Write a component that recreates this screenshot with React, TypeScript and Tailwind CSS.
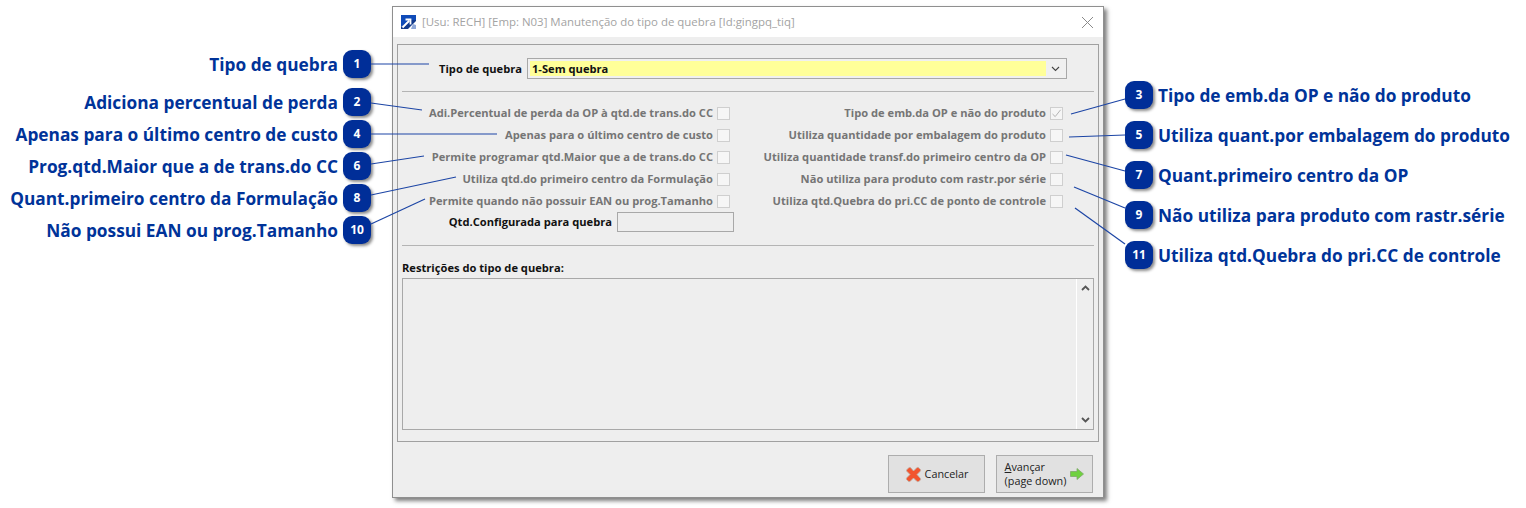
const LEFT_CALLOUTS = [
  { n: 1, label: "Tipo de quebra" },
  { n: 2, label: "Adiciona percentual de perda" },
  { n: 4, label: "Apenas para o último centro de custo" },
  { n: 6, label: "Prog.qtd.Maior que a de trans.do CC" },
  { n: 8, label: "Quant.primeiro centro da Formulação" },
  { n: 10, label: "Não possui EAN ou prog.Tamanho" },
];

const RIGHT_CALLOUTS = [
  { n: 3, label: "Tipo de emb.da OP e não do produto" },
  { n: 5, label: "Utiliza quant.por embalagem do produto" },
  { n: 7, label: "Quant.primeiro centro da OP" },
  { n: 9, label: "Não utiliza para produto com rastr.série" },
  { n: 11, label: "Utiliza qtd.Quebra do pri.CC de controle" },
];

const LEFT_CHECKS = [
  "Adi.Percentual de perda da OP à qtd.de trans.do CC",
  "Apenas para o último centro de custo",
  "Permite programar qtd.Maior que a de trans.do CC",
  "Utiliza qtd.do primeiro centro da Formulação",
  "Permite quando não possuir EAN ou prog.Tamanho",
];

const RIGHT_CHECKS = [
  { label: "Tipo de emb.da OP e não do produto", checked: true },
  { label: "Utiliza quantidade por embalagem do produto", checked: false },
  { label: "Utiliza quantidade transf.do primeiro centro da OP", checked: false },
  { label: "Não utiliza para produto com rastr.por série", checked: false },
  { label: "Utiliza qtd.Quebra do pri.CC de ponto de controle", checked: false },
];

const LEADERS = [
  [371, 64, 429, 64],
  [371, 103, 422, 110],
  [371, 134, 497, 134],
  [371, 164, 424, 156],
  [371, 195, 456, 177],
  [371, 224, 425, 199],
  [1125, 99, 1071, 114],
  [1125, 135, 1069, 137],
  [1125, 171, 1066, 155],
  [1125, 208, 1074, 187],
  [1125, 244, 1075, 208],
];

function Badge({ n }: { n: number }) {
  return (
    <div className="flex h-[28px] w-[28px] shrink-0 items-center justify-center rounded-[9px] bg-[#002e98] text-[12px] font-bold text-white shadow-[2px_2px_3px_rgba(0,0,0,0.45)]">
      {n}
    </div>
  );
}

function Check({ checked }: { checked?: boolean }) {
  return (
    <div className="flex h-[13px] w-[13px] shrink-0 items-center justify-center border border-[#cfcfcf] bg-[#f6f6f6]">
      {checked && (
        <svg width="11" height="11" viewBox="0 0 11 11" fill="none">
          <path d="M1.5 6 L4.2 8.6 L9.6 1.8" stroke="#b4b4b4" strokeWidth="1" />
        </svg>
      )}
    </div>
  );
}

function CheckRow({ label, checked }: { label: string; checked?: boolean }) {
  return (
    <div className="flex h-[22px] items-center justify-end gap-[4px] whitespace-nowrap text-[#757575]">
      <span>{label}</span>
      <Check checked={checked} />
    </div>
  );
}

function AppIcon() {
  return (
    <svg width="15" height="14" viewBox="0 0 15 14" className="shrink-0">
      <rect width="15" height="14" fill="#ffffff" />
      <path d="M0 0 H15 V5 L9 5 L0 12 Z" fill="#0f4bb8" />
      <path d="M0 12 L9 5 H15 V6 L7 14 H0 Z" fill="#123a8c" />
      <path d="M1.5 12.5 L8 6 M4.5 4.5 H9.5 V9.5" stroke="#ffffff" strokeWidth="1.8" fill="none" />
      <path d="M10 14 L12 9 L15 10 V14 Z" fill="#8fa8d8" />
    </svg>
  );
}

function CancelIcon() {
  return (
    <svg width="17" height="17" viewBox="0 0 17 17" className="shrink-0">
      <path
        d="M1.5 4 L4 1.5 Q5 1 6 2 L8.5 5 L12 1.5 Q13 1 14 2 L15.5 3.5 Q16 4.5 15 5.5 L12 8.5 L15.5 12.5 Q16 13.5 15 14.5 L13.5 15.5 Q12.5 16 11.5 15 L8.5 12 L5 15.5 Q4 16 3 15 L1.5 13.5 Q1 12.5 2 11.5 L5 8.5 L1.5 5 Z"
        fill="#f2552f"
        stroke="#bdb3aa"
        strokeWidth="0.8"
      />
    </svg>
  );
}

function NextIcon() {
  return (
    <svg width="14" height="12" viewBox="0 0 14 12" className="shrink-0">
      <path d="M0.5 3.5 H7 V0.5 L13.5 6 L7 11.5 V8.5 H0.5 Z" fill="#6fd13f" stroke="#7fa86a" strokeWidth="0.8" />
    </svg>
  );
}

function Dialog() {
  return (
    <div className="flex h-[492px] w-[712px] shrink-0 flex-col border border-[#8f8f8f] bg-[#eeeeee] text-[11.15px] font-normal shadow-[3px_3px_4px_rgba(0,0,0,0.5)]">
      <div className="flex h-[30px] shrink-0 items-center bg-white pl-[8px] pr-[9px]">
        <AppIcon />
        <span className="ml-[6px] text-[11.45px] text-[#a3a3a3]">
          [Usu: RECH] [Emp: N03] Manutenção do tipo de quebra [Id:gingpq_tiq]
        </span>
        <svg width="13" height="13" viewBox="0 0 13 13" className="ml-auto" fill="none">
          <path d="M1 1 L12 12 M12 1 L1 12" stroke="#8a8a8a" />
        </svg>
      </div>

      <div className="mx-[4px] mt-[7px] flex h-[398px] flex-col border border-[#a0a0a0] px-[4px] font-bold">
        <div className="mt-[13px] flex h-[21px] items-center justify-end pr-[27px]">
          <span className="pt-[1px] text-[#111]">Tipo de quebra</span>
          <div className="ml-[5px] flex h-[21px] w-[540px] items-center border border-[#a8a8a8] bg-[#f0f0f0] p-[2px]">
            <div className="flex h-[15px] flex-1 items-center bg-[#ffff99] px-[2px] pt-[1px] text-[#111]">1-Sem quebra</div>
            <div className="flex w-[18px] items-center justify-center">
              <svg width="9" height="6" viewBox="0 0 9 6" fill="none">
                <path d="M1 1 L4.5 4.5 L8 1" stroke="#444" strokeWidth="1.1" />
              </svg>
            </div>
          </div>
        </div>

        <div className="mt-[12px] h-px bg-[#b4b4b4]" />

        <div className="mt-[10px] grid grid-cols-[328px_333px]">
          <div>
            {LEFT_CHECKS.map((label) => (
              <CheckRow key={label} label={label} />
            ))}
          </div>
          <div>
            {RIGHT_CHECKS.map((c) => (
              <CheckRow key={c.label} label={c.label} checked={c.checked} />
            ))}
          </div>
        </div>

        <div className="flex w-[332px] items-center justify-end gap-[5px]">
          <span className="text-[#111]">Qtd.Configurada para quebra</span>
          <div className="h-[20px] w-[117px] border border-[#a8a8a8]" />
        </div>

        <div className="mt-[13px] h-px bg-[#b4b4b4]" />

        <div className="mt-[15px] h-[14px] leading-[14px] text-[#111]">Restrições do tipo de quebra:</div>

        <div className="mt-[3px] flex h-[152px] justify-end border border-[#a8a8a8]">
          <div className="flex w-[17px] flex-col items-center justify-between border-l border-white py-[6px]">
            <svg width="9" height="6" viewBox="0 0 9 6" fill="none">
              <path d="M1 5 L4.5 1.5 L8 5" stroke="#555" strokeWidth="1.8" />
            </svg>
            <svg width="9" height="6" viewBox="0 0 9 6" fill="none">
              <path d="M1 1 L4.5 4.5 L8 1" stroke="#555" strokeWidth="1.8" />
            </svg>
          </div>
        </div>
      </div>

      <div className="mt-[13px] flex justify-end gap-[11px] pr-[10px] text-[10.8px] text-[#222]">
        <div className="flex h-[38px] w-[97px] items-center justify-center gap-[3px] border border-[#adadad] bg-[#e1e1e1]">
          <CancelIcon />
          <span>Cancelar</span>
        </div>
        <div className="flex h-[38px] w-[97px] items-center justify-center gap-[4px] border border-[#adadad] bg-[#e1e1e1]">
          <span className="leading-[14px]">
            <span className="underline">A</span>vançar
            <br />
            (page down)
          </span>
          <NextIcon />
        </div>
      </div>
    </div>
  );
}

export default function App() {
  return (
    <div className="relative flex h-[508px] w-[1526px] overflow-hidden bg-white font-['Open_Sans'] text-[17.3px] font-bold text-[#003399]">
      <div className="flex w-[371px] shrink-0 flex-col items-end gap-[4px] pt-[50px]">
        {LEFT_CALLOUTS.map((c, i) => (
          <div key={c.n} className={`flex h-[28px] items-center gap-[5px] whitespace-nowrap ${i === 1 ? "mt-[6px]" : ""}`}>
            <span className="pt-[2px]">{c.label}</span>
            <Badge n={c.n} />
          </div>
        ))}
      </div>

      <div className="ml-[21px] mt-[6px]">
        <Dialog />
      </div>

      <div className="ml-[21px] flex flex-col gap-[12px] pt-[81px]">
        {RIGHT_CALLOUTS.map((c) => (
          <div key={c.n} className="flex h-[28px] items-center gap-[5px] whitespace-nowrap">
            <Badge n={c.n} />
            <span className="pt-[1px]">{c.label}</span>
          </div>
        ))}
      </div>

      <svg width="1526" height="508" className="pointer-events-none absolute left-0 top-0">
        {LEADERS.map(([x1, y1, x2, y2]) => (
          <line key={`${x1}-${y1}`} x1={x1} y1={y1} x2={x2} y2={y2} stroke="#1c45a5" strokeWidth="1.2" />
        ))}
      </svg>
    </div>
  );
}
